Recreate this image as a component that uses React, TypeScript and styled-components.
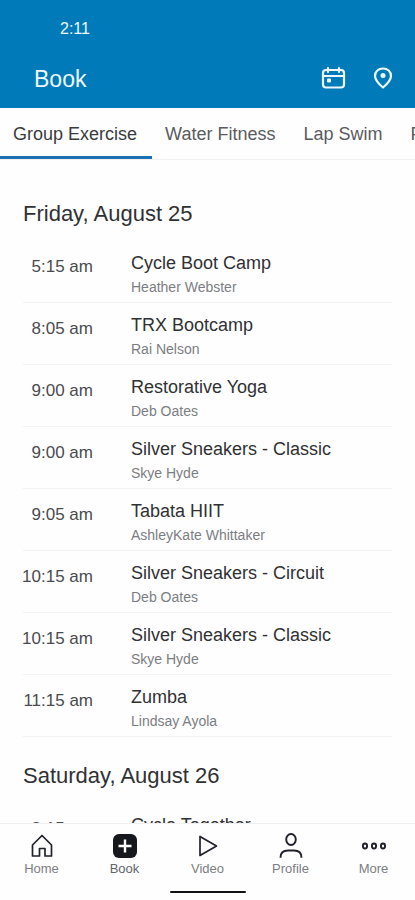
import React from "react";
import styled, { createGlobalStyle } from "styled-components";

const GlobalStyle = createGlobalStyle`
  *, *::before, *::after { box-sizing: border-box; }
  body {
    margin: 0;
    background: #fefefe;
    font-family: "Liberation Sans", Arial, sans-serif;
    color: #303134;
  }
  button { font: inherit; color: inherit; border: 0; padding: 0; background: none; cursor: pointer; }
  h1, h2, h3, p { margin: 0; font-weight: 400; }
`;

const Screen = styled.div`
  display: flex;
  flex-direction: column;
  height: 100vh;
  overflow: hidden;
`;

const Header = styled.header`
  flex: none;
  background: #007ab8;
  color: #eef8fd;
`;

const StatusBar = styled.div`
  height: 56px;
  padding: 2px 60px 0;
  display: flex;
  align-items: center;
  font-size: 16px;
`;

const TitleBar = styled.div`
  height: 52px;
  padding: 0 19px 6px 34px;
  display: flex;
  align-items: center;
  justify-content: space-between;
`;

const Title = styled.h1`
  font-size: 23px;
  line-height: 28px;
`;

const Actions = styled.div`
  display: flex;
  gap: 24px;
`;

const IconButton = styled.button`
  display: flex;
  width: 26px;
  height: 26px;
`;

const Tabs = styled.div`
  flex: none;
  display: flex;
  height: 52px;
  overflow: hidden;
  border-bottom: 1px solid #f1f1f2;
`;

const Tab = styled.button<{ $active?: boolean }>`
  flex: none;
  height: 51px;
  padding: 4px 15px 0 13px;
  font-size: 18px;
  white-space: nowrap;
  color: ${(p) => (p.$active ? "#3a3b3e" : "#5a5b60")};
  border-bottom: 3px solid ${(p) => (p.$active ? "#1a70b0" : "transparent")};
`;

const Schedule = styled.main`
  flex: 1;
  min-height: 0;
  padding: 37px 23px 0;
  overflow: hidden;
`;

const Day = styled.section`
  margin-bottom: 22px;
`;

const DayTitle = styled.h2`
  height: 44px;
  font-size: 22px;
  line-height: 34px;
`;

const ClassList = styled.ul`
  list-style: none;
  margin: 0;
  padding: 0;
`;

const ClassRow = styled.li`
  display: grid;
  grid-template-columns: 70px 1fr;
  column-gap: 38px;
  height: 62px;
  padding-top: 10px;
  border-bottom: 1px solid #f2f2f3;
`;

const Time = styled.time`
  justify-self: end;
  padding-top: 4px;
  font-size: 17px;
  line-height: 24px;
  white-space: nowrap;
  color: #4a4b4f;
`;

const ClassName = styled.h3`
  font-size: 18px;
  line-height: 24px;
`;

const Instructor = styled.p`
  font-size: 14px;
  line-height: 24px;
  color: #7c7d82;
`;

const BottomNav = styled.nav`
  flex: none;
  border-top: 1px solid #f0f0f1;
  background: #fefefe;
`;

const NavItems = styled.div`
  display: grid;
  grid-template-columns: repeat(5, 1fr);
  height: 66px;
`;

const NavItem = styled.button<{ $active?: boolean }>`
  display: flex;
  flex-direction: column;
  align-items: center;
  gap: 1px;
  padding-top: 8px;
  font-size: 13px;
  line-height: 16px;
  color: ${(p) => (p.$active ? "#636469" : "#7c7d82")};
`;

const HomeIndicator = styled.div`
  width: 76px;
  height: 2px;
  margin: 1px auto 7px;
  border-radius: 1px;
  background: #111216;
`;

const CalendarIcon = () => (
  <svg width="26" height="26" viewBox="0 0 26 26" fill="none" stroke="currentColor" strokeWidth="2.2" strokeLinecap="round" aria-hidden="true">
    <rect x="3" y="4" width="21" height="17.5" rx="3" />
    <path d="M3 10h21M8 2v4M19 2v4" />
    <rect x="7" y="12.5" width="4" height="4" rx="1" fill="currentColor" stroke="none" />
  </svg>
);

const PinIcon = () => (
  <svg width="26" height="26" viewBox="0 0 26 26" fill="none" stroke="currentColor" strokeWidth="2.2" strokeLinejoin="round" aria-hidden="true">
    <path d="M13 21.5C9.500 18.500 5 14.500 5 10C5 5.500 8.500 2.500 13 2.500S21 5.500 21 10C21 14.500 16.500 18.500 13 21.500Z" />
    <circle cx="13" cy="9.500" r="2.500" fill="currentColor" stroke="none" />
  </svg>
);

const navIcon = { width: 28, height: 28, viewBox: "0 0 28 28", fill: "none", stroke: "#20212b", strokeWidth: 1.7, "aria-hidden": true } as const;

const HomeIcon = () => (
  <svg {...navIcon} strokeLinejoin="round">
    <path d="M4.500 13L14 3.500L23.500 13V24H17V16.500H11.500V24H4.500Z" />
  </svg>
);

const BookIcon = () => (
  <svg {...navIcon}>
    <rect x="2" y="2" width="24" height="24" rx="6" fill="#17181d" stroke="none" />
    <path d="M14 7.500v13M7.500 14h13" stroke="#fff" strokeWidth="2.400" />
  </svg>
);

const VideoIcon = () => (
  <svg {...navIcon} strokeLinejoin="round">
    <path d="M6 4.500V23.500L22.500 14Z" />
  </svg>
);

const ProfileIcon = () => (
  <svg {...navIcon} strokeWidth={1.9}>
    <ellipse cx="14" cy="7.500" rx="4.800" ry="5.500" />
    <path d="M3.500 25.700C3.500 21 6.500 18.500 11 18.500H17C21.500 18.500 24.500 21 24.500 25.700" />
  </svg>
);

const MoreIcon = () => (
  <svg {...navIcon} strokeWidth={1.9}>
    <ellipse cx="5" cy="14" rx="2.100" ry="2.500" />
    <ellipse cx="14" cy="14" rx="2.100" ry="2.500" />
    <ellipse cx="23" cy="14" rx="2.100" ry="2.500" />
  </svg>
);

const tabs = ["Group Exercise", "Water Fitness", "Lap Swim", "Pickleball"];

const days = [
  {
    title: "Friday, August 25",
    classes: [
      ["5:15 am", "Cycle Boot Camp", "Heather Webster"],
      ["8:05 am", "TRX Bootcamp", "Rai Nelson"],
      ["9:00 am", "Restorative Yoga", "Deb Oates"],
      ["9:00 am", "Silver Sneakers - Classic", "Skye Hyde"],
      ["9:05 am", "Tabata HIIT", "AshleyKate Whittaker"],
      ["10:15 am", "Silver Sneakers - Circuit", "Deb Oates"],
      ["10:15 am", "Silver Sneakers - Classic", "Skye Hyde"],
      ["11:15 am", "Zumba", "Lindsay Ayola"],
    ],
  },
  {
    title: "Saturday, August 26",
    classes: [["8:15 am", "Cycle Together", ""]],
  },
];

const navItems = [
  { label: "Home", Icon: HomeIcon },
  { label: "Book", Icon: BookIcon },
  { label: "Video", Icon: VideoIcon },
  { label: "Profile", Icon: ProfileIcon },
  { label: "More", Icon: MoreIcon },
];

export default function App() {
  return (
    <Screen>
      <GlobalStyle />
      <Header>
        <StatusBar>2:11</StatusBar>
        <TitleBar>
          <Title>Book</Title>
          <Actions>
            <IconButton type="button" aria-label="Choose date"><CalendarIcon /></IconButton>
            <IconButton type="button" aria-label="Choose location"><PinIcon /></IconButton>
          </Actions>
        </TitleBar>
      </Header>
      <Tabs role="tablist">
        {tabs.map((tab, i) => (
          <Tab key={tab} type="button" role="tab" aria-selected={i === 0} $active={i === 0}>{tab}</Tab>
        ))}
      </Tabs>
      <Schedule>
        {days.map((day) => (
          <Day key={day.title}>
            <DayTitle>{day.title}</DayTitle>
            <ClassList>
              {day.classes.map(([time, name, instructor], i) => (
                <ClassRow key={i}>
                  <Time>{time}</Time>
                  <div>
                    <ClassName>{name}</ClassName>
                    <Instructor>{instructor}</Instructor>
                  </div>
                </ClassRow>
              ))}
            </ClassList>
          </Day>
        ))}
      </Schedule>
      <BottomNav aria-label="Main">
        <NavItems>
          {navItems.map(({ label, Icon }) => (
            <NavItem key={label} type="button" $active={label === "Book"} aria-current={label === "Book" ? "page" : undefined}>
              <Icon />
              {label}
            </NavItem>
          ))}
        </NavItems>
        <HomeIndicator />
      </BottomNav>
    </Screen>
  );
}
